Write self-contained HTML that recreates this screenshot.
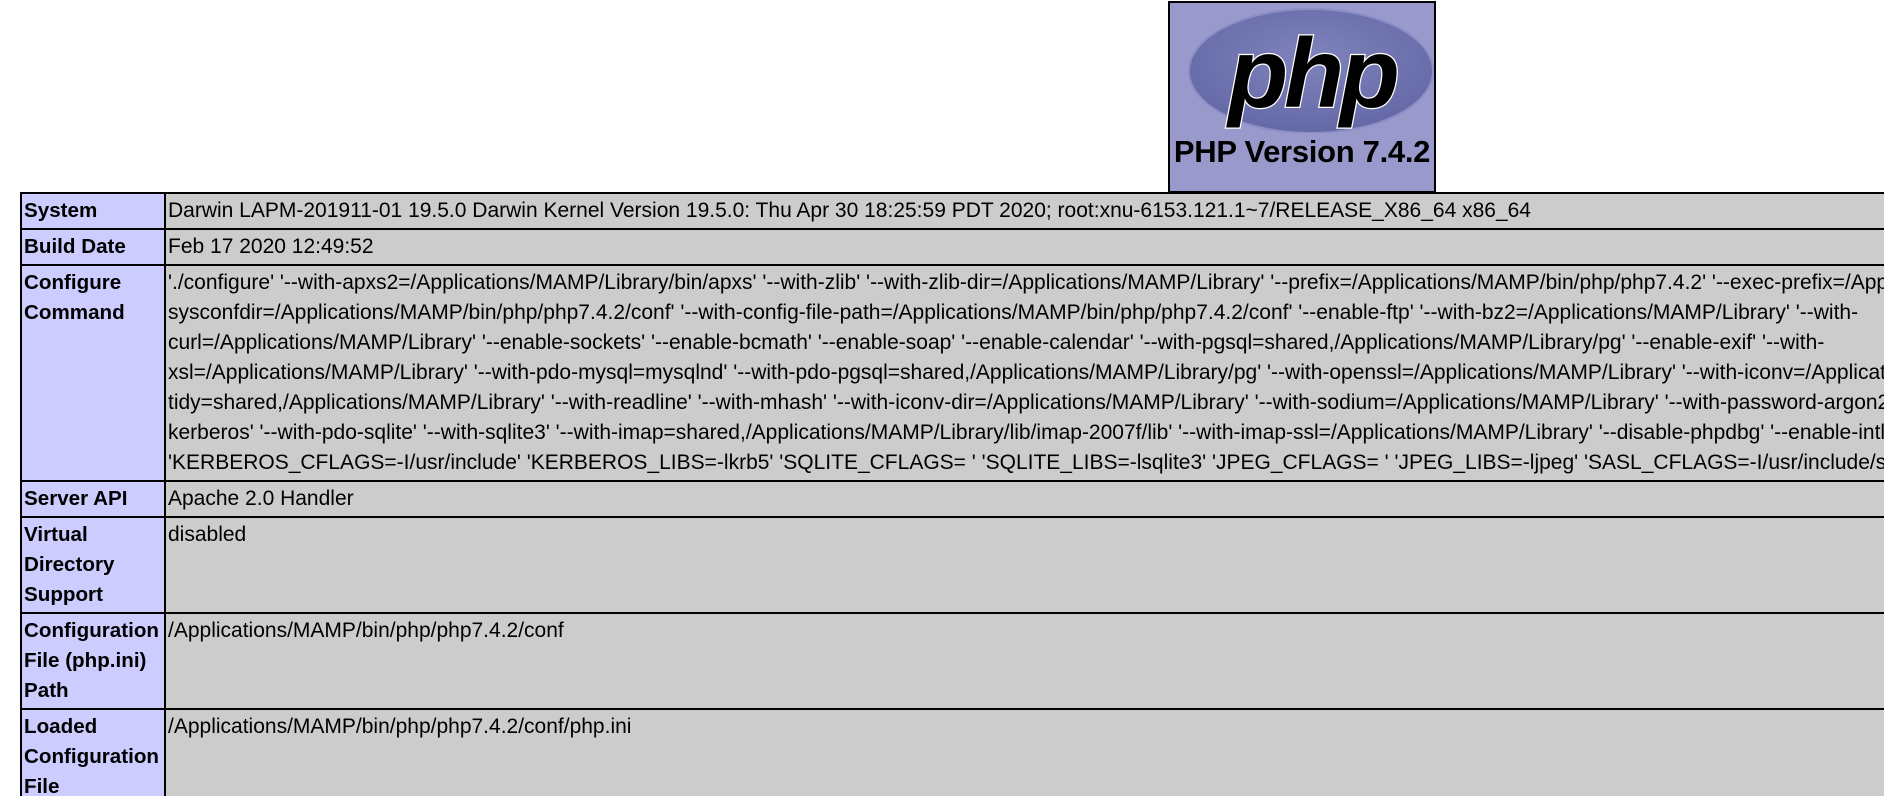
<!DOCTYPE html>
<html><head><meta charset="utf-8"><style>
html,body{margin:0;padding:0;background:#fff;width:1884px;height:796px;overflow:hidden}
body{font-family:"Liberation Sans",Arial,sans-serif;font-size:21px;color:#000}
#clip{position:absolute;left:0;top:0;width:1884px;height:796px;overflow:hidden}
#logo{position:absolute;left:1168px;top:1px;width:264px;height:188px;background:#9999cc;border:2px solid #000}
#logo .t{position:absolute;left:0;width:264px;top:131px;text-align:center;font-size:31px;font-weight:bold;white-space:nowrap;letter-spacing:-0.3px}
table{position:absolute;left:20px;top:192px;border-collapse:collapse;white-space:nowrap}
td{border:2px solid #000;padding:2px 2px;line-height:30px;vertical-align:top;background:#cccccc}
td.e{background:#ccccff;font-weight:bold;font-size:20.6px;width:138px;min-width:138px;max-width:138px;white-space:nowrap;overflow:hidden}
</style></head><body><div id="clip">
<div id="logo">
<svg width="264" height="130" style="position:absolute;left:0;top:0">
<defs><radialGradient id="g" cx="50%" cy="40%" r="60%"><stop offset="0" stop-color="#7f84bd"/><stop offset="1" stop-color="#6468a6"/></radialGradient></defs>
<ellipse cx="141" cy="68" rx="122" ry="62" fill="url(#g)" stroke="#8a8ec4" stroke-width="2"/>
<text x="142" y="104" text-anchor="middle" font-family="Liberation Sans, sans-serif" font-style="italic" font-weight="bold" font-size="98" fill="#000" stroke="#fff" stroke-width="2.5" paint-order="stroke" letter-spacing="-4">php</text>
</svg>
<div class="t">PHP Version 7.4.2</div>
</div>
<table>
<tr><td class="e">System</td><td>Darwin LAPM-201911-01 19.5.0 Darwin Kernel Version 19.5.0: Thu Apr 30 18:25:59 PDT 2020; root:xnu-6153.121.1~7/RELEASE_X86_64 x86_64</td></tr>
<tr><td class="e">Build Date</td><td>Feb 17 2020 12:49:52</td></tr>
<tr><td class="e">Configure<br>Command</td><td>'./configure' '--with-apxs2=/Applications/MAMP/Library/bin/apxs' '--with-zlib' '--with-zlib-dir=/Applications/MAMP/Library' '--prefix=/Applications/MAMP/bin/php/php7.4.2' '--exec-prefix=/Applications/MAMP/bin/php/php7.4.2' '--<br>sysconfdir=/Applications/MAMP/bin/php/php7.4.2/conf' '--with-config-file-path=/Applications/MAMP/bin/php/php7.4.2/conf' '--enable-ftp' '--with-bz2=/Applications/MAMP/Library' '--with-<br>curl=/Applications/MAMP/Library' '--enable-sockets' '--enable-bcmath' '--enable-soap' '--enable-calendar' '--with-pgsql=shared,/Applications/MAMP/Library/pg' '--enable-exif' '--with-<br>xsl=/Applications/MAMP/Library' '--with-pdo-mysql=mysqlnd' '--with-pdo-pgsql=shared,/Applications/MAMP/Library/pg' '--with-openssl=/Applications/MAMP/Library' '--with-iconv=/Applications/MAMP/Library' '--with-<br>tidy=shared,/Applications/MAMP/Library' '--with-readline' '--with-mhash' '--with-iconv-dir=/Applications/MAMP/Library' '--with-sodium=/Applications/MAMP/Library' '--with-password-argon2=/Applications/MAMP/Library' '--with-<br>kerberos' '--with-pdo-sqlite' '--with-sqlite3' '--with-imap=shared,/Applications/MAMP/Library/lib/imap-2007f/lib' '--with-imap-ssl=/Applications/MAMP/Library' '--disable-phpdbg' '--enable-intl'<br>'KERBEROS_CFLAGS=-I/usr/include' 'KERBEROS_LIBS=-lkrb5' 'SQLITE_CFLAGS= ' 'SQLITE_LIBS=-lsqlite3' 'JPEG_CFLAGS= ' 'JPEG_LIBS=-ljpeg' 'SASL_CFLAGS=-I/usr/include/sasl'</td></tr>
<tr><td class="e">Server API</td><td>Apache 2.0 Handler</td></tr>
<tr><td class="e">Virtual<br>Directory<br>Support</td><td>disabled</td></tr>
<tr><td class="e">Configuration<br>File (php.ini)<br>Path</td><td>/Applications/MAMP/bin/php/php7.4.2/conf</td></tr>
<tr><td class="e">Loaded<br>Configuration<br>File</td><td>/Applications/MAMP/bin/php/php7.4.2/conf/php.ini</td></tr>
</table>
</div></body></html>
